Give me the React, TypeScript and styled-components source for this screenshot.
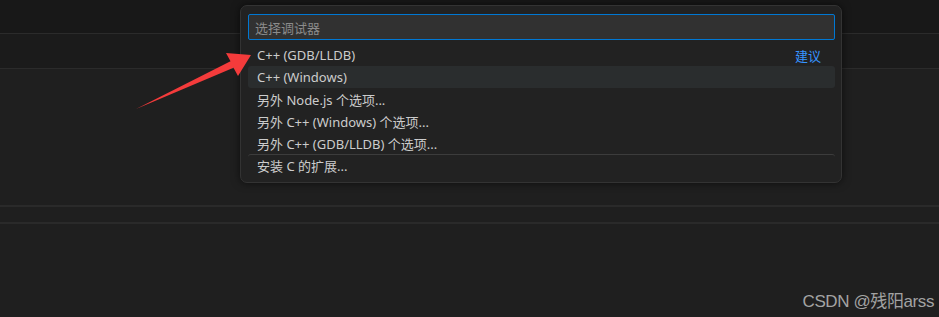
import styled, { createGlobalStyle } from "styled-components";

const GlobalStyle = createGlobalStyle`
  html, body {
    margin: 0;
    padding: 0;
    background: #1f1f1f;
  }
  * {
    box-sizing: border-box;
  }
`;

const Page = styled.div`
  position: relative;
  width: 939px;
  height: 317px;
  overflow: hidden;
  background: #1f1f1f;
  display: flex;
  flex-direction: column;
  font-family: "Noto Sans", "Noto Sans CJK SC", sans-serif;
`;

const TitleBar = styled.div`
  height: 34px;
  flex: none;
  background: #181818;
  border-bottom: 1px solid #2b2b2b;
`;

const TabBar = styled.div`
  height: 35px;
  flex: none;
  background: #1b1b1b;
  border-bottom: 1px solid #2b2b2b;
`;

const Editor = styled.div`
  height: 136px;
  flex: none;
`;

const PanelStrip = styled.div`
  height: 19px;
  flex: none;
  border-top: 2px solid #2a2a2a;
  border-bottom: 2px solid #2a2a2a;
`;

const Footer = styled.div`
  flex: 1;
  display: flex;
  align-items: flex-end;
  justify-content: flex-end;
  padding: 0 5px 5px 0;
`;

const Watermark = styled.span`
  font-family: "Liberation Sans", "Noto Sans CJK SC", sans-serif;
  font-size: 17px;
  letter-spacing: -0.4px;
  color: #a3a3a3;
`;

const QuickPick = styled.div`
  position: absolute;
  left: 240px;
  top: 5px;
  width: 602px;
  height: 178px;
  background: #222222;
  border: 1px solid #333333;
  border-radius: 7px;
  box-shadow: 0 0 8px rgba(0, 0, 0, 0.6);
  padding: 8px 6px 6px 6px;
  display: flex;
  flex-direction: column;
`;

const SearchBox = styled.div`
  height: 28px;
  margin: 0 0 4px 1px;
  background: #313131;
  border: 1px solid #0078d4;
  border-radius: 2px;
  display: flex;
  align-items: center;
  padding: 0 6px;
  font-size: 13px;
  color: #8b8b8b;
`;

const List = styled.div`
  display: flex;
  flex-direction: column;
`;

const Row = styled.div<{ $active?: boolean; $divider?: boolean }>`
  height: 22px;
  display: flex;
  align-items: center;
  justify-content: space-between;
  padding: 0 14px 0 9px;
  border-radius: 3px;
  font-size: 13px;
  color: #cccccc;
  background: ${(p) => (p.$active ? "#2a2d2e" : "transparent")};
  border-top: ${(p) => (p.$divider ? "1px solid #3c3c3c" : "none")};
  margin-left: 1px;
`;

const Hint = styled.span`
  color: #3794ff;
`;

const ArrowLayer = styled.svg`
  position: absolute;
  left: 0;
  top: 0;
  width: 939px;
  height: 317px;
  pointer-events: none;
`;

const items = [
  { label: "C++ (GDB/LLDB)", hint: "建议" },
  { label: "C++ (Windows)", active: true },
  { label: "另外 Node.js 个选项..." },
  { label: "另外 C++ (Windows) 个选项..." },
  { label: "另外 C++ (GDB/LLDB) 个选项..." },
  { label: "安装 C 的扩展...", divider: true },
];

export default function App() {
  return (
    <Page>
      <GlobalStyle />
      <TitleBar />
      <TabBar />
      <Editor />
      <PanelStrip />
      <Footer>
        <Watermark>CSDN @残阳arss</Watermark>
      </Footer>

      <QuickPick>
        <SearchBox>选择调试器</SearchBox>
        <List>
          {items.map((it) => (
            <Row key={it.label} $active={it.active} $divider={it.divider}>
              <span>{it.label}</span>
              {it.hint && <Hint>{it.hint}</Hint>}
            </Row>
          ))}
        </List>
      </QuickPick>

      <ArrowLayer viewBox="0 0 939 317">
        <polygon
          points="136,109 230.5,61.3 226,53 251,55 238,76 233.5,67.7"
          fill="#f43b3b"
        />
      </ArrowLayer>
    </Page>
  );
}
